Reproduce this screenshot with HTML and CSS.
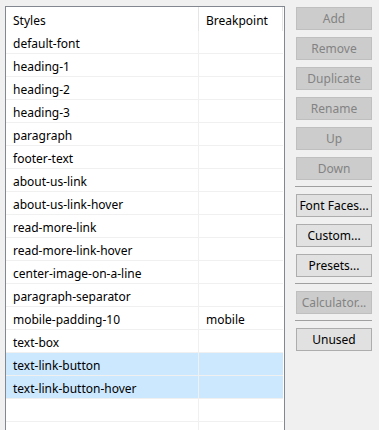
FILE: index.html
```html
<!DOCTYPE html>
<html>
<head>
<meta charset="utf-8">
<link rel="stylesheet" href="styles.css">
</head>
<body>
<div class="dialog">
  <div class="listview">
    <div class="header">
      <div class="hcell c1">Styles</div>
      <div class="hcell c2">Breakpoint</div>
    </div>
    <div class="row"><div class="cell c1">default-font</div><div class="cell c2"></div></div>
    <div class="row"><div class="cell c1">heading-1</div><div class="cell c2"></div></div>
    <div class="row"><div class="cell c1">heading-2</div><div class="cell c2"></div></div>
    <div class="row"><div class="cell c1">heading-3</div><div class="cell c2"></div></div>
    <div class="row"><div class="cell c1">paragraph</div><div class="cell c2"></div></div>
    <div class="row"><div class="cell c1">footer-text</div><div class="cell c2"></div></div>
    <div class="row"><div class="cell c1">about-us-link</div><div class="cell c2"></div></div>
    <div class="row"><div class="cell c1">about-us-link-hover</div><div class="cell c2"></div></div>
    <div class="row"><div class="cell c1">read-more-link</div><div class="cell c2"></div></div>
    <div class="row"><div class="cell c1">read-more-link-hover</div><div class="cell c2"></div></div>
    <div class="row"><div class="cell c1">center-image-on-a-line</div><div class="cell c2"></div></div>
    <div class="row"><div class="cell c1">paragraph-separator</div><div class="cell c2"></div></div>
    <div class="row"><div class="cell c1">mobile-padding-10</div><div class="cell c2">mobile</div></div>
    <div class="row"><div class="cell c1">text-box</div><div class="cell c2"></div></div>
    <div class="row selected"><div class="cell c1">text-link-button</div><div class="cell c2"></div></div>
    <div class="row selected"><div class="cell c1">text-link-button-hover</div><div class="cell c2"></div></div>
    <div class="row"><div class="cell c1"></div><div class="cell c2"></div></div>
    <div class="row"><div class="cell c1"></div><div class="cell c2"></div></div>
  </div>
  <div class="buttons">
    <button class="btn" disabled>Add</button>
    <button class="btn" disabled>Remove</button>
    <button class="btn" disabled>Duplicate</button>
    <button class="btn" disabled>Rename</button>
    <button class="btn" disabled>Up</button>
    <button class="btn" disabled>Down</button>
    <div class="sep"></div>
    <button class="btn">Font Faces...</button>
    <button class="btn">Custom...</button>
    <button class="btn">Presets...</button>
    <div class="sep"></div>
    <button class="btn" disabled>Calculator...</button>
    <div class="sep"></div>
    <button class="btn">Unused</button>
  </div>
</div>
</body>
</html>
```

FILE: styles.css
```css
html, body {
  margin: 0;
  padding: 0;
  background: #f0f0f0;
  overflow: hidden;
}
body {
  font-family: "Noto Sans", "Open Sans", sans-serif;
  font-size: 12px;
  color: #000;
  width: 379px;
  height: 430px;
}
.dialog {
  display: flex;
  align-items: flex-start;
  padding: 6px 0 0 5px;
}
.listview {
  width: 278px;
  height: 423px;
  border: 1px solid #828790;
  background: #fff;
  flex: none;
  overflow: hidden;
}
.header {
  display: flex;
  height: 24px;
}
.hcell {
  display: flex;
  align-items: center;
  padding: 2px 0 0 7px;
  box-sizing: border-box;
  height: 24px;
}
.hcell.c1 {
  width: 193px;
  border-right: 1px solid #e5e5e5;
}
.hcell.c2 {
  width: 84px;
  border-right: 1px solid #e5e5e5;
}
.row {
  display: flex;
  height: 23px;
  box-sizing: border-box;
  border-bottom: 1px solid #f0f0f0;
  width: 277px;
}
.cell {
  display: flex;
  align-items: center;
  padding: 2px 0 0 7px;
  box-sizing: border-box;
  height: 22px;
  white-space: nowrap;
}
.cell.c1 {
  width: 193px;
  border-right: 1px solid #f0f0f0;
}
.cell.c2 {
  width: 84px;
}
.row.selected .cell {
  background: #cce8ff;
}
.buttons {
  display: flex;
  flex-direction: column;
  gap: 7px;
  margin-left: 11px;
  margin-top: 1px;
  width: 76px;
}
.btn {
  font-family: inherit;
  font-size: 12px;
  height: 23px;
  width: 76px;
  padding: 1px 0 0;
  margin: 0;
  background: #e1e1e1;
  border: 1px solid #adadad;
  border-radius: 0;
  color: #000;
  line-height: 20px;
}
.btn:disabled {
  background: #cccccc;
  border-color: #bfbfbf;
  color: #838383;
}
.sep {
  height: 1px;
  background: #a0a0a0;
  margin-top: -1px;
  margin-left: -1px;
  width: 77px;
}
```
